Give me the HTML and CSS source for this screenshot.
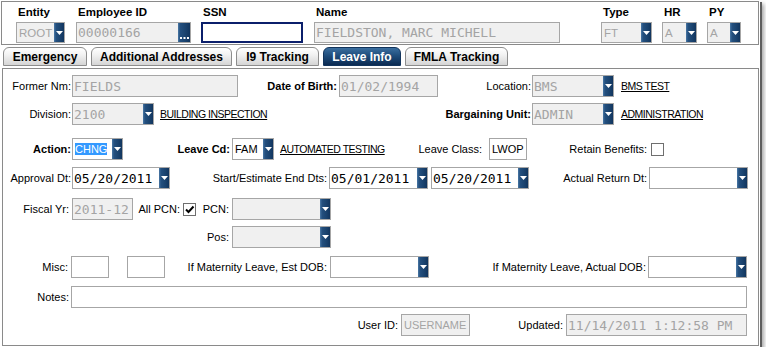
FILE: index.html
```html
<!DOCTYPE html>
<html lang="en">
<head>
<meta charset="utf-8">
<title>Employee - Leave Info</title>
<link rel="stylesheet" href="styles.css">
</head>
<body>
<div class="window">

    <!-- employee header -->
    <div class="header">
        <div class="hgrp g-entity">
            <div class="hlbl">Entity</div>
            <div class="box dis w49"><span class="val">ROOT</span><span class="dd"><svg width="7" height="4"><path d="M0 0h7L3.5 4z" fill="#fff"/></svg></span></div>
        </div>
        <div class="hgrp g-emp">
            <div class="hlbl">Employee ID</div>
            <div class="box dis w115"><span class="val mono">00000166</span><span class="dd dots"><svg width="9" height="3"><rect x="0" y="0" width="2" height="2" fill="#fff"/><rect x="3.5" y="0" width="2" height="2" fill="#fff"/><rect x="7" y="0" width="2" height="2" fill="#fff"/></svg></span></div>
        </div>
        <div class="hgrp g-ssn">
            <div class="hlbl">SSN</div>
            <div class="box focus w102"><span class="val"></span></div>
        </div>
        <div class="hgrp g-name">
            <div class="hlbl">Name</div>
            <div class="box dis w246"><span class="val mono">FIELDSTON, MARC MICHELL</span></div>
        </div>
        <div class="hgrp g-type">
            <div class="hlbl">Type</div>
            <div class="box dis w51"><span class="val">FT</span><span class="dd"><svg width="7" height="4"><path d="M0 0h7L3.5 4z" fill="#fff"/></svg></span></div>
        </div>
        <div class="hgrp g-hr">
            <div class="hlbl">HR</div>
            <div class="box dis w35"><span class="val">A</span><span class="dd"><svg width="7" height="4"><path d="M0 0h7L3.5 4z" fill="#fff"/></svg></span></div>
        </div>
        <div class="hgrp g-py">
            <div class="hlbl">PY</div>
            <div class="box dis w34"><span class="val">A</span><span class="dd"><svg width="7" height="4"><path d="M0 0h7L3.5 4z" fill="#fff"/></svg></span></div>
        </div>
    </div>

    <!-- tabs -->
    <div class="tabs">
        <a class="tab t1" href="#">Emergency</a>
        <a class="tab t2" href="#">Additional Addresses</a>
        <a class="tab t3" href="#">I9 Tracking</a>
        <a class="tab t4 active" href="#">Leave Info</a>
        <a class="tab t5" href="#">FMLA Tracking</a>
    </div>

    <!-- leave info form -->
    <div class="panel">
        <div class="row r1">
            <div class="lbl w69 p1">Former Nm:</div>
            <div class="box dis w166"><span class="val mono">FIELDS</span></div>
            <div class="lbl b w101">Date of Birth:</div>
            <div class="box dis w99"><span class="val mono">01/02/1994</span></div>
            <div class="lbl w94 p1">Location:</div>
            <div class="box dis w82"><span class="val mono">BMS</span><span class="dd"><svg width="7" height="4"><path d="M0 0h7L3.5 4z" fill="#fff"/></svg></span></div>
            <a class="lnk" href="#">BMS TEST</a>
        </div>

        <div class="row r2">
            <div class="lbl w69 p1">Division:</div>
            <div class="cell w366">
                <div class="box dis w82"><span class="val mono">2100</span><span class="dd"><svg width="7" height="4"><path d="M0 0h7L3.5 4z" fill="#fff"/></svg></span></div>
                <a class="lnk" href="#">BUILDING INSPECTION</a>
            </div>
            <div class="lbl b w94 p1">Bargaining Unit:</div>
            <div class="box dis w82"><span class="val mono">ADMIN</span><span class="dd"><svg width="7" height="4"><path d="M0 0h7L3.5 4z" fill="#fff"/></svg></span></div>
            <a class="lnk" href="#">ADMINISTRATION</a>
        </div>

        <div class="row r3">
            <div class="lbl b w69 p1">Action:</div>
            <div class="box w51"><span class="val"><span class="sel">CHNG</span></span><span class="dd"><svg width="7" height="4"><path d="M0 0h7L3.5 4z" fill="#fff"/></svg></span></div>
            <div class="lbl b w109">Leave Cd:</div>
            <div class="cell w156">
                <div class="box w42"><span class="val">FAM</span><span class="dd"><svg width="7" height="4"><path d="M0 0h7L3.5 4z" fill="#fff"/></svg></span></div>
                <a class="lnk" href="#">AUTOMATED TESTING</a>
            </div>
            <div class="lbl w101 p7">Leave Class:</div>
            <div class="box w38"><span class="val">LWOP</span></div>
            <div class="lbl w124 p4">Retain Benefits:</div>
            <span class="chk"></span>
        </div>

        <div class="row r4">
            <div class="lbl w69 p1">Approval Dt:</div>
            <div class="box w98"><span class="val mono dark">05/20/2011</span><span class="dd"><svg width="7" height="4"><path d="M0 0h7L3.5 4z" fill="#fff"/></svg></span></div>
            <div class="lbl w159">Start/Estimate End Dts:</div>
            <div class="box w99"><span class="val mono dark">05/01/2011</span><span class="dd"><svg width="7" height="4"><path d="M0 0h7L3.5 4z" fill="#fff"/></svg></span></div>
            <div class="box w98 ml3"><span class="val mono dark">05/20/2011</span><span class="dd"><svg width="7" height="4"><path d="M0 0h7L3.5 4z" fill="#fff"/></svg></span></div>
            <div class="lbl w120">Actual Return Dt:</div>
            <div class="box w99"><span class="val"></span><span class="dd"><svg width="7" height="4"><path d="M0 0h7L3.5 4z" fill="#fff"/></svg></span></div>
        </div>

        <div class="row r5">
            <div class="lbl w69 p3">Fiscal Yr:</div>
            <div class="box dis w61"><span class="val mono">2011-12</span></div>
            <div class="lbl w50 p3">All PCN:</div>
            <span class="chk on"><svg width="11" height="11"><path d="M2 5.5l2.5 2.5L9.5 2.5" stroke="#000" stroke-width="2" fill="none"/></svg></span>
            <div class="lbl w36 p3">PCN:</div>
            <div class="box dis w99"><span class="val"></span><span class="dd"><svg width="7" height="4"><path d="M0 0h7L3.5 4z" fill="#fff"/></svg></span></div>
        </div>

        <div class="row r6">
            <div class="lbl w229 p3">Pos:</div>
            <div class="box dis w99"><span class="val"></span><span class="dd"><svg width="7" height="4"><path d="M0 0h7L3.5 4z" fill="#fff"/></svg></span></div>
        </div>

        <div class="row r7">
            <div class="lbl w68 p3">Misc:</div>
            <div class="box w38"></div>
            <div class="box w38 ml18"></div>
            <div class="lbl w165 p3">If Maternity Leave, Est DOB:</div>
            <div class="box w99"><span class="val"></span><span class="dd"><svg width="7" height="4"><path d="M0 0h7L3.5 4z" fill="#fff"/></svg></span></div>
            <div class="lbl w219">If Maternity Leave, Actual DOB:</div>
            <div class="box w99"><span class="val"></span><span class="dd"><svg width="7" height="4"><path d="M0 0h7L3.5 4z" fill="#fff"/></svg></span></div>
        </div>

        <div class="row r8">
            <div class="lbl w68">Notes:</div>
            <div class="box w676"></div>
        </div>

        <div class="row r9">
            <div class="lbl w398 p3">User ID:</div>
            <div class="box dis w69"><span class="val">USERNAME</span></div>
            <div class="lbl w96 p3">Updated:</div>
            <div class="box dis w181"><span class="val mono">11/14/2011 1:12:58 PM</span></div>
        </div>
    </div>
</div>
</body>
</html>
```

FILE: styles.css
```css
/* page + window frame */
body{
    margin: 0;
    background: #fff;
    font-family: "Liberation Sans", Arial, sans-serif;
    font-size: 11px;
    color: #000;
}
.window{
    width: 760px;
    height: 347px;
    box-sizing: border-box;
    padding: 1px 0 0 1px;
    background: #fff;
    box-shadow: 2px 2px 0 #5e5e5e, 4px 4px 4px rgba(0,0,0,.35);
}

/* header strip with employee fields */
.header{
    display: flex;
    width: 758px;
    height: 44px;
    box-sizing: border-box;
    border: 1px solid #8a8a8a;
    padding-left: 14px;
}
.hgrp{
    display: flex;
    flex-direction: column;
}
.hlbl{
    height: 20px;
    box-sizing: border-box;
    padding: 3px 0 0 2px;
    line-height: 14px;
    font-size: 11.5px;
    font-weight: bold;
}
.hgrp .box{ height: 21px; }
.hgrp .val{ font-size: 11.5px; }
.hgrp .val.mono{ font-size: 13px; }
.g-emp{ margin-left: 11px; }
.g-ssn{ margin-left: 10px; }
.g-name{ margin-left: 11px; }
.g-type{ margin-left: 41px; }
.g-hr, .g-py{ margin-left: 10px; }

/* tabs */
.tabs{
    display: flex;
    margin: 2px 0 2px 2px;
}
.tab{
    height: 19px;
    box-sizing: border-box;
    margin-right: 4px;
    border: 1px solid #8d8d8d;
    border-radius: 6px 6px 0 0;
    background: linear-gradient(#ffffff, #f2f2f2 40%, #d5d5d5);
    color: #000;
    font-size: 12px;
    font-weight: bold;
    text-decoration: none;
    text-align: center;
    line-height: 18px;
}
.tab.active{
    border-color: #12345c;
    background: linear-gradient(#3a6e9f, #1d4a78 50%, #0c2b52);
    color: #fff;
}
.t1{ width: 84px; }
.t2{ width: 141px; }
.t3{ width: 83px; }
.t4{ width: 78px; }
.t5{ width: 103px; }

/* content panel */
.panel{
    width: 757px;
    height: 278px;
    box-sizing: border-box;
    margin-left: 1px;
    border: 1px solid #8a8a8a;
}
.row{
    display: flex;
    align-items: center;
    height: 22px;
}
.r1{ margin-top: 6px; }
.r2{ margin-top: 6px; }
.r3{ margin-top: 13px; }
.r4{ margin-top: 7px; }
.r5{ margin-top: 9px; }
.r6{ margin-top: 6px; }
.r7{ margin-top: 8px; }
.r8{ margin-top: 8px; }
.r9{ margin-top: 6px; }

.lbl{
    flex: none;
    box-sizing: border-box;
    padding-right: 2px;
    text-align: right;
    white-space: nowrap;
}
.lbl.b{ font-weight: bold; }
.p1{ padding-right: 1px; }
.p3{ padding-right: 3px; }
.p4{ padding-right: 4px; }
.p7{ padding-right: 7px; }
.cell{
    display: flex;
    align-items: center;
    flex: none;
}

/* inputs and drop downs */
.box{
    display: flex;
    align-items: center;
    flex: none;
    height: 22px;
    box-sizing: border-box;
    border: 1px solid #a6a6a6;
    background: #fff;
    overflow: hidden;
}
.box.dis{
    background: #f0f0f0;
    color: #a4a4a4;
}
.box.focus{
    border: 2px solid #0b1f6b;
}
.val{
    flex: 1;
    padding-left: 2px;
    white-space: nowrap;
    overflow: hidden;
}
.mono{
    font-family: "DejaVu Sans Mono", monospace;
    font-size: 13px;
}
.val.mono{ padding-left: 1px; }
.mono.dark{ color: #000; }
.sel{
    background: #3399ff;
    color: #fff;
    padding: 1px 0;
}
.dd{
    display: flex;
    align-items: center;
    justify-content: center;
    align-self: stretch;
    width: 11px;
    margin: -1px -1px -1px 0;
    background: linear-gradient(90deg, #4b79a6 0, #24507f 2px, #1a426d 60%, #0f3159);
}
.dd.dots{
    width: 13px;
    align-items: flex-end;
    padding-bottom: 3px;
    box-sizing: border-box;
}
.chk{
    display: flex;
    align-items: center;
    justify-content: center;
    width: 13px;
    height: 13px;
    box-sizing: border-box;
    border: 1px solid #6f6f6f;
    background: #fff;
}
.lnk{
    margin-left: 7px;
    color: #000;
    font-size: 10.5px;
    letter-spacing: -0.5px;
    text-decoration: underline;
    white-space: nowrap;
}
.cell .lnk{ margin-left: 6px; }
.ml3{ margin-left: 3px; }
.ml18{ margin-left: 18px; }

/* widths */
.w34{ width: 34px; } .w35{ width: 35px; } .w36{ width: 36px; }
.w38{ width: 38px; } .w42{ width: 42px; } .w49{ width: 49px; }
.w50{ width: 50px; } .w51{ width: 51px; } .w61{ width: 61px; }
.w68{ width: 68px; } .w69{ width: 69px; } .w82{ width: 82px; }
.w94{ width: 94px; } .w96{ width: 96px; } .w98{ width: 98px; }
.w99{ width: 99px; } .w101{ width: 101px; } .w102{ width: 102px; }
.w109{ width: 109px; } .w115{ width: 115px; } .w120{ width: 120px; }
.w124{ width: 124px; } .w156{ width: 156px; } .w159{ width: 159px; }
.w165{ width: 165px; } .w166{ width: 166px; } .w181{ width: 181px; }
.w219{ width: 219px; } .w229{ width: 229px; } .w246{ width: 246px; }
.w366{ width: 366px; } .w398{ width: 398px; } .w676{ width: 676px; }
```
